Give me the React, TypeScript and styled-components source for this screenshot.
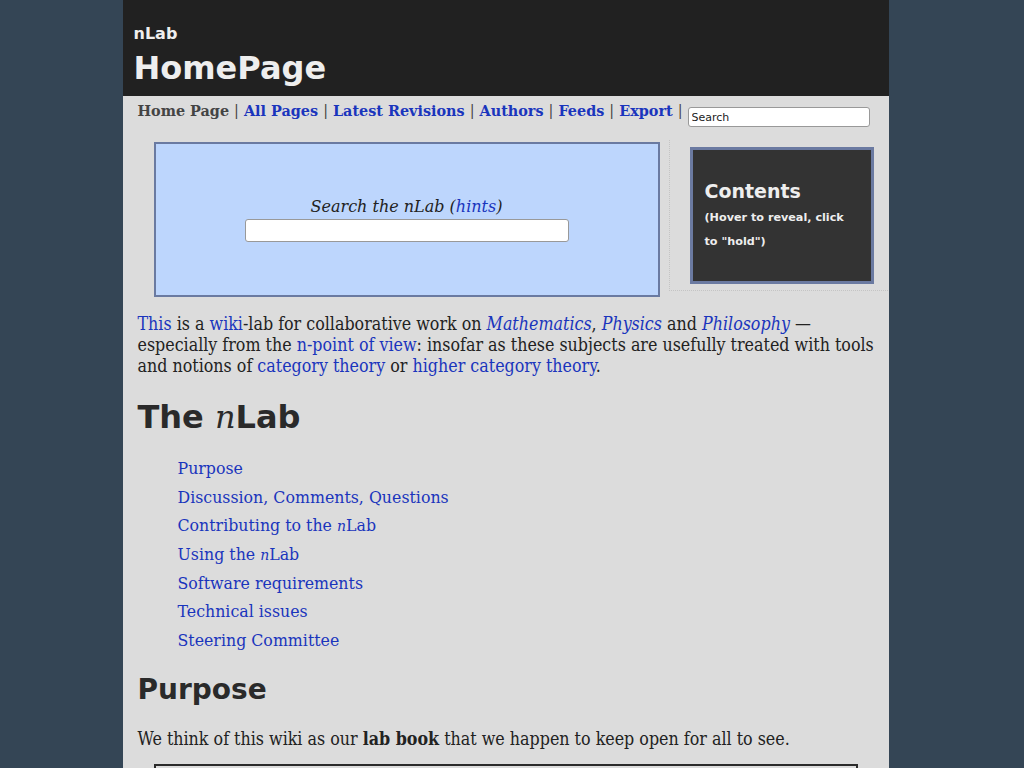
import React from "react";
import styled, { createGlobalStyle } from "styled-components";

const Global = createGlobalStyle`
  html, body { margin: 0; padding: 0; background: #344555; }
  body { font-family: "DejaVu Serif", serif; color: #222; }
  #root { display: flex; justify-content: center; }
`;

const Page = styled.div`
  width: 766px;
  margin-right: 13px;
  background: #dcdcdc;
  min-height: 900px;
`;

const Header = styled.header`
  background: #212121;
  height: 96px;
  padding: 25px 0 0 11px;
  box-sizing: border-box;
  font-family: "DejaVu Sans", sans-serif;
  color: #eee;
`;

const Site = styled.div`
  font-size: 16px;
  font-weight: bold;
  line-height: 18px;
`;

const Title = styled.h1`
  margin: 6px 0 0;
  font-size: 32px;
  font-weight: bold;
  line-height: 38px;
`;

const Nav = styled.nav`
  display: flex;
  align-items: center;
  white-space: nowrap;
  padding: 0 0 0 15px;
  height: 28px;
  font-family: "DejaVu Serif", serif;
  font-weight: bold;
  font-size: 14.4px;
  color: #444;
`;

const NavItem = styled.a<{ $current?: boolean }>`
  color: ${(p) => (p.$current ? "#444" : "#1a35bd")};
  text-decoration: none;
`;

const Sep = styled.span`
  color: #444;
  font-weight: normal;
  margin: 0 5px;
`;

const NavSearch = styled.input`
  align-self: flex-start;
  margin: 11px 0 0 0;
  width: 182px;
  height: 20px;
  box-sizing: border-box;
  border: 1px solid #999;
  border-radius: 3px;
  font-family: "DejaVu Sans", sans-serif;
  font-size: 11px;
  padding: 2px 3px;
  background: #fff;
  &::placeholder { color: #222; }
`;

const TopRow = styled.div`
  display: flex;
  align-items: flex-start;
  padding: 18px 0 0 31px;
`;

const SearchBox = styled.div`
  width: 506px;
  height: 155px;
  box-sizing: border-box;
  background: #bdd6fd;
  border: 2px solid #6a7aa1;
  display: flex;
  flex-direction: column;
  align-items: center;
  justify-content: center;
`;

const SearchLabel = styled.div`
  font-style: italic;
  font-size: 16px;
  line-height: 20px;
  color: #222;
`;

const HintLink = styled.a`
  color: #1a35bd;
  text-decoration: none;
`;

const SearchInput = styled.input`
  margin-top: 2px;
  width: 324px;
  height: 23px;
  box-sizing: border-box;
  border: 1px solid #999;
  border-radius: 3px;
  background: #fff;
`;

const TocWrap = styled.div`
  margin-left: 9px;
  margin-top: -2px;
  width: 219px;
  height: 151px;
  box-sizing: border-box;
  border-left: 1px dotted #c4c4c4;
  border-bottom: 1px dotted #c4c4c4;
  padding: 7px 0 0 20px;
`;

const Toc = styled.div`
  width: 184px;
  height: 137px;
  box-sizing: border-box;
  background: #333;
  border: 3px solid #6b7aa1;
  padding: 29px 22px 0 12px;
  font-family: "DejaVu Sans", sans-serif;
  color: #eee;
  font-weight: bold;
`;

const TocTitle = styled.div`
  font-size: 19px;
  line-height: 24px;
  margin-bottom: 3px;
`;

const TocHint = styled.div`
  font-size: 11.2px;
  line-height: 24px;
`;

const Content = styled.main`
  padding: 0 6px 0 15px;
`;

const Para = styled.p<{ $top?: number }>`
  margin: ${(p) => p.$top ?? 14}px 0 0;
  font-family: "DejaVu Serif Condensed", "DejaVu Serif", serif;
  font-stretch: condensed;
  font-size: 17.7px;
  line-height: 21px;
`;

const A = styled.a`
  color: #1a35bd;
  text-decoration: none;
`;

const Em = styled.em`
  font-style: italic;
`;

const H1 = styled.h2`
  margin: 19px 0 0;
  font-family: "DejaVu Sans", sans-serif;
  font-size: 32px;
  line-height: 42px;
  font-weight: bold;
  color: #2a2a2a;
`;

const MathN = styled.i`
  font-family: "DejaVu Serif", serif;
  font-weight: normal;
  font-style: italic;
`;

const List = styled.ul`
  list-style: none;
  margin: 17px 0 0;
  padding: 0 0 0 40px;
`;

const Item = styled.li`
  font-size: 15.8px;
  line-height: 28.67px;
`;

const SmallN = styled.i`
  font-size: 14px;
`;

const H2 = styled.h3`
  margin: 17px 0 0;
  font-family: "DejaVu Sans", sans-serif;
  font-size: 28px;
  line-height: 34px;
  font-weight: bold;
  color: #2a2a2a;
`;

const Boxed = styled.div`
  margin: 14px 0 0 16px;
  width: 704px;
  height: 60px;
  border: 2px solid #2a2a2a;
  box-sizing: border-box;
`;

const navLinks = ["All Pages", "Latest Revisions", "Authors", "Feeds", "Export"];

const toc: React.ReactNode[] = [
  "Purpose",
  "Discussion, Comments, Questions",
  <>Contributing to the <SmallN>n</SmallN>Lab</>,
  <>Using the <SmallN>n</SmallN>Lab</>,
  "Software requirements",
  "Technical issues",
  "Steering Committee",
];

export default function App() {
  return (
    <>
      <Global />
      <Page>
        <Header>
          <Site>nLab</Site>
          <Title>HomePage</Title>
        </Header>
        <Nav>
          <NavItem $current>Home Page</NavItem>
          {navLinks.map((l) => (
            <React.Fragment key={l}>
              <Sep>|</Sep>
              <NavItem href="#">{l}</NavItem>
            </React.Fragment>
          ))}
          <Sep>|</Sep>
          <NavSearch placeholder="Search" />
        </Nav>
        <TopRow>
          <SearchBox>
            <SearchLabel>
              Search the nLab (<HintLink href="#">hints</HintLink>)
            </SearchLabel>
            <SearchInput />
          </SearchBox>
          <TocWrap>
            <Toc>
              <TocTitle>Contents</TocTitle>
              <TocHint>(Hover to reveal, click to "hold")</TocHint>
            </Toc>
          </TocWrap>
        </TopRow>
        <Content>
          <Para $top={17}>
            <A href="#">This</A> is a <A href="#">wiki</A>-lab for collaborative work on{" "}
            <A href="#"><Em>Mathematics</Em></A>, <A href="#"><Em>Physics</Em></A> and{" "}
            <A href="#"><Em>Philosophy</Em></A> — especially from the{" "}
            <A href="#">n-point of view</A>: insofar as these subjects are usefully treated with
            tools and notions of <A href="#">category theory</A> or{" "}
            <A href="#">higher category theory</A>.
          </Para>
          <H1>
            The <MathN>n</MathN>Lab
          </H1>
          <List>
            {toc.map((t, i) => (
              <Item key={i}>
                <A href="#">{t}</A>
              </Item>
            ))}
          </List>
          <H2>Purpose</H2>
          <Para $top={21}>
            We think of this wiki as our <b>lab book</b> that we happen to keep open for all to see.
          </Para>
          <Boxed />
        </Content>
      </Page>
    </>
  );
}
